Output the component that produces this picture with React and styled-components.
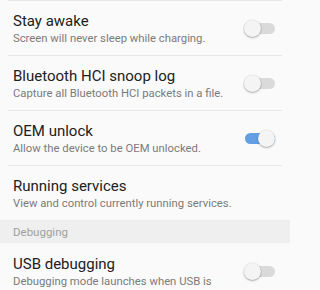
import React from 'react';
import styled, { createGlobalStyle } from 'styled-components';

const GlobalStyle = createGlobalStyle`
  html, body {
    margin: 0;
    padding: 0;
    background: #fafafa;
  }
  body {
    font-family: Roboto, 'Noto Sans', sans-serif;
  }
`;

const List = styled.div`
  width: 290px;
  height: 290px;
  overflow: hidden;
  display: flex;
  flex-direction: column;
  background: #fafafa;
`;

const Row = styled.div`
  flex: none;
  display: flex;
  align-items: center;
  height: 55px;
  box-sizing: border-box;
  margin: 0 8px;
  padding: 0 5px;
  border-top: 1px solid ${(p) => (p.$divider ? '#e8e8e8' : 'transparent')};
`;

const Texts = styled.div`
  flex: 1;
  min-width: 0;
  display: flex;
  flex-direction: column;
  padding-top: 2px;
`;

const Title = styled.div`
  font-size: 15px;
  line-height: 19px;
  color: #212121;
  white-space: nowrap;
`;

const Summary = styled.div`
  font-size: 11.3px;
  line-height: 16px;
  color: #7a7a7a;
  white-space: nowrap;
`;

const Header = styled.div`
  flex: none;
  height: 22px;
  box-sizing: content-box;
  border-top: 1px solid #ececec;
  background: #efefef;
  color: #a0a0a0;
  font-size: 11.5px;
  line-height: 22px;
  padding: 0 13px;
`;

const Track = styled.div`
  position: relative;
  flex: none;
  width: 30px;
  height: 11px;
  border-radius: 6px;
  margin: 1px 2px 0 0;
  background: ${(p) => (p.$on ? '#659de3' : '#dadada')};
`;

const Thumb = styled.div`
  position: absolute;
  top: -3px;
  left: ${(p) => (p.$on ? '13px' : '-1px')};
  width: 17px;
  height: 17px;
  border-radius: 50%;
  background: #f4f4f4;
  box-shadow: 0 1px 2px rgba(0, 0, 0, 0.3), 0 0 0 0.5px rgba(0, 0, 0, 0.08);
`;

const Switch = ({ on }) => (
  <Track $on={on}>
    <Thumb $on={on} />
  </Track>
);

const items = [
  { title: 'Stay awake', summary: 'Screen will never sleep while charging.', toggle: false },
  { title: 'Bluetooth HCI snoop log', summary: 'Capture all Bluetooth HCI packets in a file.', toggle: false },
  { title: 'OEM unlock', summary: 'Allow the device to be OEM unlocked.', toggle: true },
  { title: 'Running services', summary: 'View and control currently running services.' },
];

export default function App() {
  return (
    <List>
      <GlobalStyle />
      {items.map((it) => (
        <Row key={it.title} $divider>
          <Texts>
            <Title>{it.title}</Title>
            <Summary>{it.summary}</Summary>
          </Texts>
          {it.toggle !== undefined && <Switch on={it.toggle} />}
        </Row>
      ))}
      <Header>Debugging</Header>
      <Row>
        <Texts>
          <Title>USB debugging</Title>
          <Summary>Debugging mode launches when USB is</Summary>
        </Texts>
        <Switch on={false} />
      </Row>
    </List>
  );
}
